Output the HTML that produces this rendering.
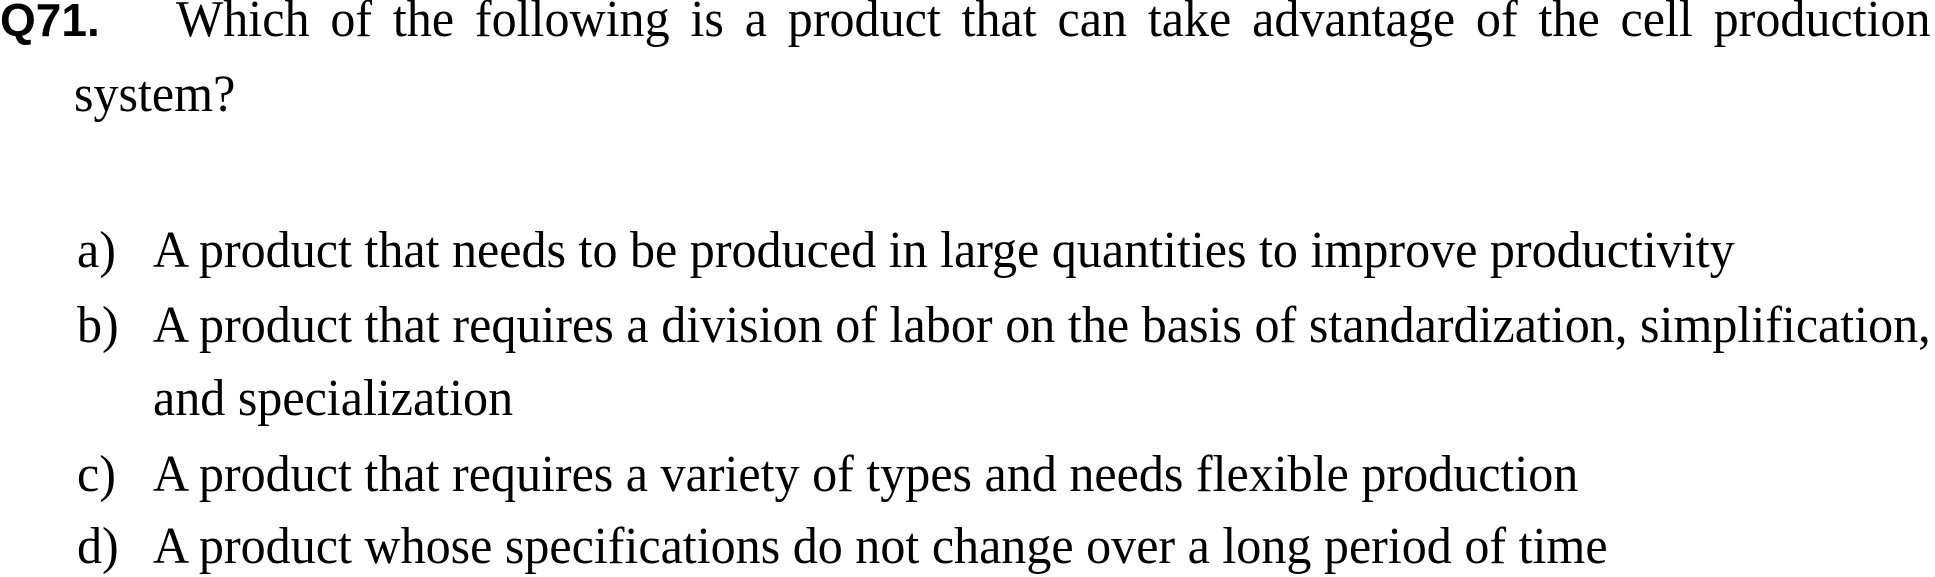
<!DOCTYPE html>
<html><head><meta charset="utf-8"><style>
html,body{margin:0;padding:0;background:#fff;width:1935px;height:577px;overflow:hidden;position:relative}
.l{position:absolute;font-family:"Liberation Serif",serif;font-size:52px;line-height:60px;white-space:nowrap;color:#000;transform-origin:0 0;transform:scaleX(0.963)}
.j{text-align:justify;text-align-last:justify;white-space:normal}
.q{position:absolute;left:0;font-family:"Liberation Sans",sans-serif;font-weight:bold;font-size:46px;line-height:50px;color:#000}
</style></head><body>
<div class="q" style="top:-5px">Q71.</div>
<div class="l j" style="left:176px;top:-10px;width:1822px">Which of the following is a product that can take advantage of the cell production</div>
<div class="l" style="left:74px;top:65px">system?</div>

<div class="l" style="left:77px;top:221px">a)</div>
<div class="l" style="left:153px;top:221px">A product that needs to be produced in large quantities to improve productivity</div>

<div class="l" style="left:77px;top:296px">b)</div>
<div class="l j" style="left:153px;top:296px;width:1846px">A product that requires a division of labor on the basis of standardization, simplification,</div>
<div class="l" style="left:153px;top:369px">and specialization</div>

<div class="l" style="left:77px;top:445px">c)</div>
<div class="l" style="left:153px;top:445px">A product that requires a variety of types and needs flexible production</div>

<div class="l" style="left:77px;top:517px">d)</div>
<div class="l" style="left:153px;top:517px">A product whose specifications do not change over a long period of time</div>
</body></html>
